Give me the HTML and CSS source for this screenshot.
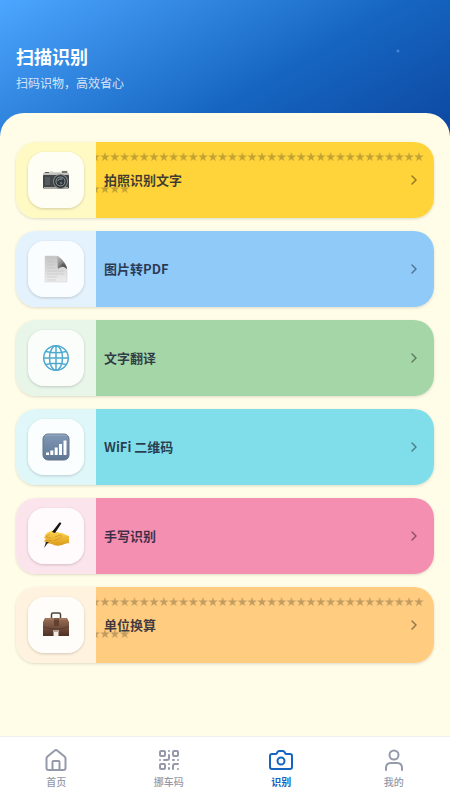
FILE: index.html
```
<!DOCTYPE html>
<html lang="zh-CN">
<head>
<meta charset="utf-8">
<meta name="viewport" content="width=device-width, initial-scale=1">
<title>扫描识别</title>
<link rel="stylesheet" href="styles.css">
</head>
<body>
<svg class="defs" aria-hidden="true">
  <defs>
    <pattern id="stars" x="-5.7" y="0" width="9.81" height="10" patternUnits="userSpaceOnUse">
      <path d="M4.900 0 6 3.500H9.600L6.700 5.700 7.800 9.200 4.900 7.100 2 9.200 3.100 5.700.2 3.500H3.800Z" fill="#4b4020" fill-opacity=".34"/>
    </pattern>
    <linearGradient id="bars" x2="0" y2="1"><stop stop-color="#8099b7"/><stop offset="1" stop-color="#607694"/></linearGradient>
    <linearGradient id="leather" x2="0" y2="1"><stop stop-color="#9a7058"/><stop offset="1" stop-color="#4e3024"/></linearGradient>
    <linearGradient id="paper" x2="0" y2="1"><stop stop-color="#c4c4c4"/><stop offset="1" stop-color="#eeeeee"/></linearGradient>
    <linearGradient id="fold" x2="1" y2="1"><stop stop-color="#d8d8d8"/><stop offset="1" stop-color="#454545"/></linearGradient>
    <linearGradient id="skin" x2="0" y2="1"><stop stop-color="#ffd751"/><stop offset="1" stop-color="#dc991b"/></linearGradient>
    <linearGradient id="metal" x2="0" y2="1"><stop stop-color="#e5e5df"/><stop offset="1" stop-color="#a7a7a2"/></linearGradient>
  </defs>
</svg>
<div class="app">
  <header class="header">
    <h1>扫描识别</h1>
    <p>扫码识物，高效省心</p>
  </header>
  <main class="panel">
    <a class="card yellow" href="#photo">
      <span class="side"><span class="tile"><svg viewBox="0 0 28 28" aria-hidden="true">
        <path d="M2 6h6V5h3v1h8V4.500h7V7h1v4H1V7h1Z" fill="url(#metal)"/><path d="M20 5h5v2h-5Z" fill="#777468"/><path d="M3 6h4v1H3Z" fill="#555"/>
        <rect x="1" y="9" width="26" height="13.500" rx="1" fill="#42474a"/><path d="M2 21h24v2H2Z" fill="#aaaaa3"/><path d="M3 11h5v8H3Z" fill="#555c60"/>
        <circle cx="18.500" cy="15.500" r="7.500" fill="#858987"/><circle cx="18.500" cy="15.500" r="6.500" fill="#303638"/><circle cx="18.500" cy="15.500" r="5" fill="#92989a"/><circle cx="18.500" cy="15.500" r="4" fill="#30383d"/><path d="M15.500 15a4 3 0 0 1 5-2" stroke="#a5b2b7" fill="none"/><circle cx="19" cy="17" r="1.300" fill="#626e75"/>
      </svg></span></span>
      <span class="body"><span class="decor" aria-hidden="true"><svg class="row full"><rect width="100%" height="10" fill="url(#stars)"/></svg><svg class="row short"><rect width="100%" height="10" fill="url(#stars)"/></svg></span><span class="label">拍照识别文字</span><svg class="chevron" viewBox="0 0 16 16" aria-hidden="true"><path d="m6 4 4 4-4 4"/></svg></span>
    </a>
    <a class="card blue" href="#pdf">
      <span class="side"><span class="tile"><svg viewBox="0 0 28 28" aria-hidden="true">
        <path d="M3 1h12l10 12v14H3Z" fill="url(#paper)" stroke="#cecece" stroke-width=".5"/><path d="M12 1h4c3 2 9 8 9 13-3-3-7-2-9 0-1-4 1-11-4-13Z" fill="url(#fold)"/><path d="M16 14c1-3 5-4 9 0-1-2-2-4-4-6-2 2-4 3-5 6Z" fill="#444" opacity=".45"/>
        <path d="M5 7h8M5 10h8M5 13h9M5 16h17M5 19h17M5 22h10M5 25h9" stroke="#bababa" stroke-width=".5"/>
      </svg></span></span>
      <span class="body"><span class="label">图片转PDF</span><svg class="chevron" viewBox="0 0 16 16" aria-hidden="true"><path d="m6 4 4 4-4 4"/></svg></span>
    </a>
    <a class="card green" href="#translate">
      <span class="side"><span class="tile"><svg viewBox="0 0 28 28" aria-hidden="true">
        <g fill="none" stroke="#4faad0" stroke-width="1.500"><circle cx="14" cy="14" r="12.300"/><ellipse cx="14" cy="14" rx="6.500" ry="12.300"/><path d="M14 1.500v25M1.500 14h25M4 7.500c6 1.500 14 1.500 20 0M4 20.500c6-1.500 14-1.500 20 0"/></g>
      </svg></span></span>
      <span class="body"><span class="label">文字翻译</span><svg class="chevron" viewBox="0 0 16 16" aria-hidden="true"><path d="m6 4 4 4-4 4"/></svg></span>
    </a>
    <a class="card cyan" href="#wifi">
      <span class="side"><span class="tile"><svg viewBox="0 0 28 28" aria-hidden="true">
        <rect x="1" y="1" width="26" height="26" rx="5" fill="url(#bars)" stroke="#627489"/><path d="M3 3.500Q4 2 6 2h16q2 0 3 1.500" fill="none" stroke="#a4b5c9" stroke-width=".7"/>
        <path d="M4 19.500h3V22H4ZM8.300 17.500h3V22h-3ZM12.700 14.500h3V22h-3ZM17 11h3v11h-3ZM21.500 7.500h3V22h-3Z" fill="#fff"/>
      </svg></span></span>
      <span class="body"><span class="label">WiFi 二维码</span><svg class="chevron" viewBox="0 0 16 16" aria-hidden="true"><path d="m6 4 4 4-4 4"/></svg></span>
    </a>
    <a class="card pink" href="#handwriting">
      <span class="side"><span class="tile"><svg viewBox="0 0 28 28" aria-hidden="true">
        <path d="M3 14c0-2 3-4 6-5 2-1 4-1 5 1l5 1c2 0 3 1 5 2l3 1v7c-3 0-4 1-7 2-4 1-7 1-10-1l-6-1-2-2 2-2-2-1Z" fill="url(#skin)"/><path d="M8 12c-1 1-3 2-4 3l5 1M4 18l6 1M13 15l5-2c2 0 2 2 0 3l-6 3" fill="none" stroke="#c98c21" stroke-width=".6"/>
        <path d="M17 1c1-1 3 0 2 1l-6 9-3-1Z" fill="#171717"/><path d="m4 20-2 6 3-4 2-2Z" fill="#242321"/>
      </svg></span></span>
      <span class="body"><span class="label">手写识别</span><svg class="chevron" viewBox="0 0 16 16" aria-hidden="true"><path d="m6 4 4 4-4 4"/></svg></span>
    </a>
    <a class="card orange" href="#units">
      <span class="side"><span class="tile"><svg viewBox="0 0 28 28" aria-hidden="true">
        <path d="M9.500 7V3.500q0-1.500 1.500-1.500h6q1.500 0 1.500 1.500V7" fill="none" stroke="#534137" stroke-width="1.500"/><path d="M3 7h22l2 4v14H1V11Z" fill="url(#leather)"/><path d="M1 15q13 5 26 0v1q-13 5-26 0Z" fill="#422a20" opacity=".4"/>
        <path d="M12 7h5v8h-5Z" fill="#65402e"/><path d="M11.500 20h5v5h-5Z" fill="#f2ece7"/><path d="M11 19h6v2h-6Z" fill="#bca99b"/><path d="M4 8h20" stroke="#b48a70" stroke-width=".7"/>
      </svg></span></span>
      <span class="body"><span class="decor" aria-hidden="true"><svg class="row full"><rect width="100%" height="10" fill="url(#stars)"/></svg><svg class="row short"><rect width="100%" height="10" fill="url(#stars)"/></svg></span><span class="label">单位换算</span><svg class="chevron" viewBox="0 0 16 16" aria-hidden="true"><path d="m6 4 4 4-4 4"/></svg></span>
    </a>
  </main>
  <nav class="tabs">
    <a href="#home"><svg viewBox="0 0 24 24" aria-hidden="true"><path d="M2.500 10.500q0-1 1-2L10.500 2.700q1.500-1.300 3 0L20.500 8.500q1 1 1 2V20q0 2-2 2h-15q-2 0-2-2ZM8.500 22v-8q0-1 1-1h5q1 0 1 1v8"/></svg><span>首页</span></a>
    <a href="#car"><svg viewBox="0 0 24 24" aria-hidden="true"><rect x="3" y="3" width="5" height="5" rx="1"/><rect x="16" y="3" width="5" height="5" rx="1"/><rect x="3" y="16" width="5" height="5" rx="1"/><path d="M21 16h-3q-2 0-2 2v3M21 21v.01M12 7v3q0 2-2 2H7M3 12h.01M12 3h.01M12 16v.01M16 12h1M21 12v.01M12 21v-1"/></svg><span>挪车码</span></a>
    <a class="active" href="#scan" aria-current="page"><svg viewBox="0 0 24 24" aria-hidden="true"><path d="M3 6h3.500q1 0 1.500-1l.5-1q.5-1 1.500-1h4q1 0 1.500 1l.5 1q.5 1 1.500 1H21q2 0 2 2v11q0 2-2 2H3q-2 0-2-2V8q0-2 2-2Z"/><circle cx="12" cy="13" r="3.500"/></svg><span>识别</span></a>
    <a href="#me"><svg viewBox="0 0 24 24" aria-hidden="true"><circle cx="12" cy="7" r="4.500"/><path d="M4 22v-2q0-5 5-5h6q5 0 5 5v2"/></svg><span>我的</span></a>
  </nav>
</div>
</body>
</html>
```
FILE: styles.css
```
* { box-sizing: border-box; }
body {
  margin: 0;
  font-family: "Noto Sans CJK SC", "Noto Sans", sans-serif;
  background: #fffde7;
}
a { color: inherit; text-decoration: none; }
svg { display: block; flex: none; }
.defs { position: absolute; width: 0; height: 0; }
.app {
  min-height: 100vh;
  display: flex;
  flex-direction: column;
}
.header {
  padding: 43px 16px 45px;
  color: #fff;
  background:
    radial-gradient(circle at 398px 51px, #5b9bea 0, transparent 2px),
    linear-gradient(150deg, #4da6ff 0%, #1565c0 60%, #0d47a1 100%);
}
h1 { margin: 0; font-size: 18px; line-height: 26px; font-weight: 700; }
.header p {
  margin: 5px 0 0;
  font-size: 12px;
  line-height: 18px;
  color: rgba(255, 255, 255, .8);
}
.panel {
  flex: 1;
  display: flex;
  flex-direction: column;
  gap: 13px;
  margin-top: -24px;
  padding: 29px 16px 24px;
  border-radius: 24px 24px 0 0;
  background: #fffde7;
}
.card {
  min-height: 76px;
  display: flex;
  overflow: hidden;
  border-radius: 20px;
  box-shadow: 0 1px 3px rgba(0, 0, 0, .14);
}
.side {
  width: 80px;
  display: grid;
  place-items: center;
}
.tile {
  width: 56px;
  height: 56px;
  display: grid;
  place-items: center;
  border-radius: 16px;
  background: rgba(255, 255, 255, .82);
  box-shadow: 0 1px 3px rgba(0, 0, 0, .18);
}
.tile svg { width: 28px; height: 28px; }
.body {
  flex: 1;
  position: relative;
  display: flex;
  align-items: center;
  justify-content: space-between;
  padding: 0 12px 0 8px;
}
.label {
  position: relative;
  font-size: 13px;
  line-height: 20px;
  font-weight: 700;
  color: rgba(20, 24, 48, .82);
}
.decor { position: absolute; inset: 10px 10px auto 0; }
.row { width: 100%; height: 10px; }
.row.short { width: 34px; margin-top: 22px; }
.chevron {
  position: relative;
  width: 16px;
  height: 16px;
  fill: none;
  stroke: rgba(0, 0, 0, .42);
  stroke-width: 1.5;
  stroke-linecap: round;
  stroke-linejoin: round;
}
.yellow .side { background: #fff9c4; } .yellow .body { background: #ffd43b; }
.blue .side { background: #e3f2fd; } .blue .body { background: #90caf9; }
.green .side { background: #e8f5e9; } .green .body { background: #a5d6a7; }
.cyan .side { background: #e0f7fa; } .cyan .body { background: #80deea; }
.pink .side { background: #fce4ec; } .pink .body { background: #f48fb1; }
.orange .side { background: #fff3e0; } .orange .body { background: #ffcc80; }
.tabs {
  position: sticky;
  bottom: 0;
  display: grid;
  grid-template-columns: repeat(4, 1fr);
  min-height: 64px;
  background: #fff;
  border-top: 1px solid #f0f0f0;
}
.tabs a {
  display: flex;
  flex-direction: column;
  align-items: center;
  justify-content: center;
  gap: 2px;
  font-size: 10px;
  line-height: 16px;
  font-weight: 500;
  color: #949aaa;
}
.tabs svg {
  width: 24px;
  height: 24px;
  fill: none;
  stroke: currentColor;
  stroke-width: 2;
  stroke-linecap: round;
  stroke-linejoin: round;
}
.tabs .active { color: #1565c0; font-weight: 700; }
```
